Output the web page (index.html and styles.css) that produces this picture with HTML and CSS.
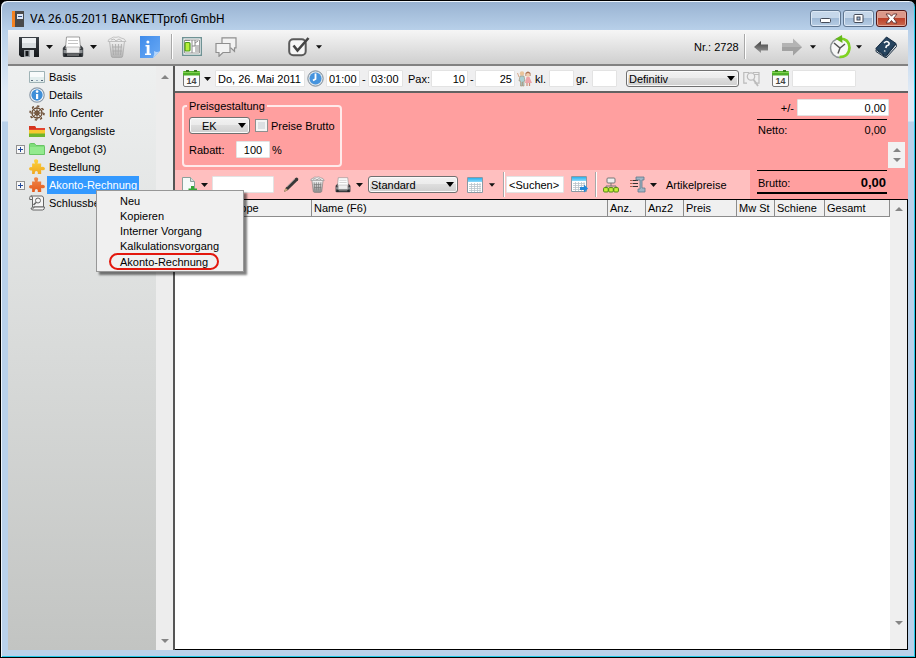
FILE: index.html
```html
<!DOCTYPE html>
<html lang="de">
<head>
<meta charset="utf-8">
<title>VA 26.05.2011 BANKETTprofi GmbH</title>
<link rel="stylesheet" href="styles.css">
</head>
<body>
<svg class="defs" aria-hidden="true">
  <defs>
    <linearGradient id="g-steel" x1="0" y1="0" x2="0" y2="1"><stop offset="0" stop-color="#fafafa"/><stop offset="1" stop-color="#8c8c8c"/></linearGradient>
    <linearGradient id="g-dark" x1="0" y1="0" x2="0" y2="1"><stop offset="0" stop-color="#3c4147"/><stop offset="1" stop-color="#15181b"/></linearGradient>
    <linearGradient id="g-arrow" x1="0" y1="0" x2="0" y2="1"><stop offset="0" stop-color="#3e3e3e"/><stop offset="1" stop-color="#9a9a9a"/></linearGradient>
    <linearGradient id="g-sky" x1="0" y1="0" x2="0" y2="1"><stop offset="0" stop-color="#27b2ef"/><stop offset="1" stop-color="#8fd8f8"/></linearGradient>
    <linearGradient id="g-blue" x1="0" y1="0" x2="1" y2="1"><stop offset="0" stop-color="#3f8bea"/><stop offset="1" stop-color="#6aaaf5"/></linearGradient>
    <linearGradient id="g-orange" x1="0" y1="0" x2="0" y2="1"><stop offset="0" stop-color="#f08a4c"/><stop offset="1" stop-color="#e4591b"/></linearGradient>
    <linearGradient id="g-yellow" x1="0" y1="0" x2="0" y2="1"><stop offset="0" stop-color="#fcd23c"/><stop offset="1" stop-color="#f0a820"/></linearGradient>
    <symbol id="caret" viewBox="0 0 7 4"><path d="M0 0h7L3.500 4z" fill="#111"/></symbol>
    <symbol id="calendar" viewBox="0 0 17 17">
      <path d="M.5 3.500h16v11.500q0 1.500-1.500 1.500H2q-1.500 0-1.500-1.500z" fill="#fbfbfb" stroke="#777"/>
      <path d="M0 2q0-1 1-1h15q1 0 1 1v3.500H0z" fill="#4fae28"/><path d="M0 2h17v1H0z" fill="#7fd44f"/>
      <path d="M3 0h3v2H3zM11 0h3v2h-3z" fill="#3a7d20"/>
      <text x="8.500" y="14" text-anchor="middle" font-family="Liberation Sans, sans-serif" font-size="9" font-weight="bold" fill="#444">14</text>
    </symbol>
    <symbol id="trash" viewBox="0 0 20 22">
      <path d="M2.500 5h15l-1.800 15q-.2 1.500-2 1.500H6.300q-1.800 0-2-1.500z" fill="url(#g-steel)" stroke="#777" stroke-width=".8"/>
      <path d="M1 5.500q0-2.500 3-3Q6 .3 9 1.300q3-1.300 5 .7 4 .3 5 3.500z" fill="#eee" stroke="#888" stroke-width=".8"/>
      <path d="M4 4l3-1 2 2 3-2 3 2" fill="none" stroke="#777" stroke-width=".8"/>
      <path d="M5.500 8l1 11M8.500 8l.4 11M11.500 8l-.4 11M14.500 8l-1 11M5 11h10M5.500 15h9.500" stroke="#777" stroke-width=".9" fill="none"/>
    </symbol>
    <symbol id="printer" viewBox="0 0 22 22">
      <path d="M4.500 1h13l1 11H3.500z" fill="#fff" stroke="#888" stroke-width=".8"/><path d="M6 4.500h10M6 7.500h10" stroke="#c4c4c4"/>
      <path d="M3.500 9L.8 12v7.500q0 1.500 1.500 1.500h17.400q1.500 0 1.500-1.500V12L18.500 9v4h-15z" fill="#3b3f43"/>
      <path d="M1.500 14h19v3h-19z" fill="#8d9194"/><path d="M4.500 11h13v6h-13z" fill="#eee" stroke="#999" stroke-width=".6"/><path d="M3 18h16l1 2.500H2z" fill="#202428"/><path d="M5 18.500h12v1H5z" fill="#aaa"/>
    </symbol>
    <symbol id="sheet" viewBox="0 0 16 16">
      <path d="M.5.500h15v15H.5z" fill="#fff" stroke="#8a98a2"/><path d="M1 1h14v4H1z" fill="url(#g-sky)"/>
      <path d="M2 7.500h12M2 9.500h12M2 11.500h12M2 13.500h12M4.500 6v9M7.500 6v9M10.500 6v9M13 6v9" stroke="#b7c3ca" stroke-width=".8"/>
    </symbol>
    <symbol id="puzzle" viewBox="0 0 18 18">
      <path d="M3.500 5h3.300Q4.800 2 6.500.7 8.500-.3 10 1.200 10.800 3 9.500 5h4.200v4q3.500-1.200 4.200 1.300.2 3.200-4.200 2.200V17H9.800q.7-3.300-1.500-3.400-2.200.1-1.800 3.400h-3v-4.200Q.2 13.800 0 11q.3-2.500 3.500-1.700z"/>
    </symbol>
  </defs>
</svg>
<div class="window">
  <header class="titlebar">
    <svg class="app-icon" viewBox="0 0 12 16" aria-hidden="true"><path d="M0 0h12v16H0z" fill="#4a4a4a"/><path d="M0 0h3v16H0z" fill="#f58220"/><path d="M5 3h6v5H5z" fill="#dfe8f7"/><path d="M6 5h4v1H6z" fill="#35558a"/></svg>
    <h1>VA 26.05.2011 BANKETTprofi GmbH</h1>
    <div class="window-buttons">
      <button class="win" type="button" aria-label="Minimieren"><svg width="13" height="11" viewBox="0 0 13 11"><rect x="1.500" y="5.500" width="10" height="4" rx="1" fill="#fff" stroke="#444b58"/></svg></button>
      <button class="win" type="button" aria-label="Maximieren"><svg width="13" height="11" viewBox="0 0 13 11"><rect x="2" y="1.500" width="9" height="8" rx="1" fill="#fff" stroke="#444b58"/><rect x="5" y="4" width="3" height="3" fill="#9db7d6" stroke="#444b58"/></svg></button>
      <button class="win close" type="button" aria-label="Schließen"><svg width="13" height="11" viewBox="0 0 13 11"><path d="M1 1h3.500l2 2.200L8.500 1H12L8.700 5.300 12 10H8.500l-2-2.500-2 2.500H1l3.300-4.700z" fill="#fff" stroke="#5b3030" stroke-width=".9"/></svg></button>
    </div>
  </header>

  <div class="client">
    <div class="toolbar">
      <div class="tools">
        <button type="button" aria-label="Speichern"><svg width="20" height="20" viewBox="0 0 20 20"><path d="M0 0h20v20H2l-2-2z" fill="url(#g-dark)"/><path d="M3 1h14v10H3z" fill="#eef1f3"/><path d="M3 6h14v5H3z" fill="#d8dde0"/><path d="M5 13h10v7H5z" fill="#9ba0a4"/><path d="M6.500 14h3v5h-3z" fill="#15181b"/><path d="M11 13h4v7h-4z" fill="#d0d3d5"/></svg></button>
        <button type="button" aria-label="Speichern Optionen"><svg width="7" height="4"><use href="#caret"/></svg></button>
        <button type="button" aria-label="Drucken"><svg width="22" height="22"><use href="#printer"/></svg></button>
        <button type="button" aria-label="Drucken Optionen"><svg width="7" height="4"><use href="#caret"/></svg></button>
        <button class="faded" type="button" aria-label="Löschen"><svg width="20" height="22"><use href="#trash"/></svg></button>
        <button type="button" aria-label="Information"><svg width="20" height="22" viewBox="0 0 20 22"><path d="M0 0h20v15l-7 7H0z" fill="url(#g-blue)"/><path d="M20 15l-7 7q2-4 1-7 3 2 6 0z" fill="#b5d6fc"/><path d="M5.500 9h4v8.500H11V19H5v-1.500h1.700v-7H5.500z" fill="#fff"/><circle cx="7.900" cy="6" r="1.500" fill="#fff"/></svg></button>
        <span class="rule"></span>
        <button type="button" aria-label="Raumplan"><svg width="20" height="19" viewBox="0 0 20 19"><rect x=".7" y=".7" width="18.600" height="17.600" fill="#fff" stroke="#6f9294" stroke-width="1.400"/><path d="M2.500 3h15v13h-15z" fill="none" stroke="#999"/><rect x="3" y="5.500" width="5" height="8.500" rx="1" fill="#b5ee3a" stroke="#4c9a18" stroke-width="1.200"/><path d="M3 3.500h5M10 3v13M10 9h3V3M13 6l3-2M14 8v7M16 8v7" stroke="#888" fill="none"/></svg></button>
        <button type="button" aria-label="Nachrichten"><svg width="22" height="20" viewBox="0 0 22 20" fill="#f2f2f2" stroke="#8f8f8f" stroke-width="1.200"><path d="M7 .8h14v10h-1.500v3.500L16 11H7z"/><path d="M1 6.500h14v9H8l-4 3.800v-3.800H1z"/></svg></button>
        <button type="button" aria-label="Erledigt"><svg width="23" height="21" viewBox="0 0 23 21"><rect x="1.200" y="3.200" width="16.500" height="16" rx="4" fill="#f7f7f7" stroke="#5a5a5a" stroke-width="2"/><path d="M5.500 9.500l4 5L20.500 2" fill="none" stroke="#444" stroke-width="2.600"/></svg></button>
        <button type="button" aria-label="Erledigt Optionen"><svg width="6" height="4"><use href="#caret"/></svg></button>
      </div>
      <div class="tools-right">
        <span class="number">Nr.: 2728</span>
        <span class="rule"></span>
        <button type="button" aria-label="Zurück"><svg width="14" height="14" viewBox="0 0 14 14"><path d="M0 7l7-6v3.500h7v6H7V13z" fill="url(#g-arrow)"/></svg></button>
        <button type="button" aria-label="Vor"><svg width="20" height="18" viewBox="0 0 20 18"><path d="M20 9l-9-8.500V5H0v8h11v4.500z" fill="#b4b4b4"/><path d="M0 9h20l-9 8.500V13H0z" fill="#a2a2a2"/></svg></button>
        <button type="button" aria-label="Verlauf Optionen"><svg width="6" height="4"><use href="#caret"/></svg></button>
        <button type="button" aria-label="Verlauf"><svg width="23" height="24" viewBox="0 0 23 24"><circle cx="11" cy="13" r="9.500" fill="#f7f7f7" stroke="#8d9396" stroke-width="1.500"/><path d="M10 3.500Q20 3 20.500 12.500q-.5 9.500-10 9.500" fill="none" stroke="#7fd321" stroke-width="2.600"/><path d="M13.500 8L6.500 3.800 13 0z" fill="#65b81a"/><path d="M5 8l6 5 5-4M11 13l-2 5.500" fill="none" stroke="#555" stroke-width="1.500"/></svg></button>
        <button type="button" aria-label="Termine Optionen"><svg width="6" height="4"><use href="#caret"/></svg></button>
        <button type="button" aria-label="Hilfe"><svg width="22" height="22" viewBox="0 0 22 22"><path d="M1 13.500L10.500 21 21 8l.5 2.500L11 22 1 15.500z" fill="#dfe4e8" stroke="#172c40"/><path d="M11.500 1L21 7.500 10.500 20 .8 12.500z" fill="#26445f" stroke="#142b42"/><path d="M9 7q3-3 5 0 .8 2-2.500 3l-.7 2M10 14.500l-.5 1" fill="none" stroke="#fff" stroke-width="1.600"/></svg></button>
      </div>
    </div>

    <div class="workspace">
      <nav class="sidebar" aria-label="Vorgang">
        <ul class="tree">
          <li><span></span><svg viewBox="0 0 16 16"><path d="M.5 2.500h15v11H.5z" fill="#e3eeee" stroke="#9fb3b6"/><path d="M1 3h14v5H1z" fill="#f8fbfb"/><path d="M2 11.500h2M12 11.500h2" stroke="#567"/><path d="M7 11.500h2" stroke="#9ab"/></svg><a href="#">Basis</a></li>
          <li><span></span><svg viewBox="0 0 16 16"><circle cx="8" cy="8" r="7.200" fill="#fff" stroke="#8a99a8" stroke-width="1.200"/><circle cx="8" cy="8" r="5.700" fill="#3f8fd8"/><path d="M7 7h2.200v5H7z" fill="#fff"/><circle cx="8.100" cy="4.600" r="1.300" fill="#fff"/></svg><a href="#">Details</a></li>
          <li><span></span><svg viewBox="0 0 16 16" fill="none" stroke="#6b4c33"><circle cx="8" cy="8" r="5" stroke-width="1.300"/><circle cx="8" cy="8" r="2" stroke-width="1.300"/><path d="M8 1v14M1 8h14M3 3l10 10M13 3L3 13" stroke-width=".8"/><circle cx="8" cy="8" r="7" stroke-dasharray="2.200 3.300" stroke-width="1.500"/></svg><a href="#">Info Center</a></li>
          <li><span></span><svg viewBox="0 0 16 16"><path d="M0 3h6l1 2h9v3H0z" fill="#e3442d"/><path d="M0 7h16v4H0z" fill="#f7c92e"/><path d="M0 10.500h16V14H0z" fill="#70b52c"/><path d="M0 3h6l1 2v1H0z" fill="#d4341f"/></svg><a href="#">Vorgangsliste</a></li>
          <li><button class="plus" type="button" aria-label="Angebot aufklappen"></button><svg viewBox="0 0 16 16"><path d="M.5 3.500q0-1 1-1h4l1.500 2h8q.5 0 .5 1v8H.5z" fill="#7fdd7a" stroke="#68c565"/><path d="M1 6h14v7H1z" fill="#93ea8e"/></svg><a href="#">Angebot (3)</a></li>
          <li><span></span><svg viewBox="0 0 18 18"><use href="#puzzle" fill="url(#g-yellow)"/></svg><a href="#">Bestellung</a></li>
          <li><button class="plus" type="button" aria-label="Akonto-Rechnung aufklappen"></button><svg viewBox="0 0 18 18"><use href="#puzzle" fill="url(#g-orange)"/></svg><a class="selected" href="#">Akonto-Rechnung</a></li>
          <li><span></span><svg viewBox="0 0 16 16" fill="#f5f5f5" stroke="#666"><path d="M3.500 12V3q0-2-1.500-2h11q1.500.5 1.500 2v9z"/><path d="M3.500 4.500H.7V2.500Q.8 1 2 1t1.500 2z"/><path d="M5 12h10.500q0 3-2 3H4q-2-.2-2-2h3z"/><circle cx="9" cy="5.500" r="2.500"/><path d="M7 7.500L4.500 10" stroke-width="1.600"/></svg><a href="#">Schlussbe</a></li>
        </ul>
        <div class="scrollbar"><i class="up"></i><i class="down"></i></div>
      </nav>

      <main class="main">
        <div class="event">
          <button type="button" aria-label="Kalender"><svg width="17" height="17"><use href="#calendar"/></svg></button>
          <button type="button" aria-label="Kalender Optionen"><svg width="7" height="4"><use href="#caret"/></svg></button>
          <input class="date" type="text" aria-label="Datum" value="Do, 26. Mai 2011">
          <svg width="17" height="17" viewBox="0 0 17 17" aria-hidden="true"><circle cx="8.500" cy="8.500" r="7.700" fill="#dce4ea" stroke="#7c8a96"/><circle cx="8.500" cy="8.500" r="6" fill="#4694de"/><path d="M8.500 3.500v5.500L6 10.500" stroke="#fff" stroke-width="1.800" fill="none"/></svg>
          <input type="text" aria-label="Beginn" value="01:00">
          <span>-</span>
          <input type="text" aria-label="Ende" value="03:00">
          <label for="pax">Pax:</label>
          <input class="num" id="pax" type="text" value="10">
          <span>-</span>
          <input class="num" type="text" aria-label="Pax bis" value="25">
          <svg width="17" height="17" viewBox="0 0 17 17" aria-hidden="true"><circle cx="5" cy="3.500" r="2.200" fill="#e9c49b"/><path d="M3 6h4l1 5H7v5H5.500v-4H5v4H3.500v-5H2z" fill="#a9cfd3" stroke="#a28a6b" stroke-width=".6"/><path d="M2 7L.5 3" stroke="#d8a98a"/><path d="M8.500 3q2.500-3 5 0v3h-5z" fill="#a96f4e"/><circle cx="11" cy="5" r="2" fill="#f1cdb0"/><path d="M9.500 7h3l2.500 6H8z" fill="#eea3a8"/><path d="M10 13v3M12.500 13v3" stroke="#c98c74" stroke-width="1.200"/></svg>
          <label for="kl">kl.</label>
          <input id="kl" type="text">
          <label for="gr">gr.</label>
          <input id="gr" type="text">
          <span class="select status"><select aria-label="Status"><option>Definitiv</option></select></span>
          <button class="faded" type="button" aria-label="Suchen"><svg width="17" height="16" viewBox="0 0 17 16" fill="none" stroke="#888" stroke-width="1.200"><path d="M6 1.500H.8v10.700H4M10 1.500h6v10.700h-4.500M11 3.500h5"/><circle cx="8" cy="5.500" r="3.700"/><path d="M10.500 8.500l4.500 6.500" stroke-width="1.800"/></svg></button>
          <button type="button" aria-label="Optionsdatum"><svg width="17" height="17"><use href="#calendar"/></svg></button>
          <input type="text" aria-label="Option bis">
        </div>

        <section class="pricing">
          <div class="pricing-left">
            <fieldset class="group">
              <legend>Preisgestaltung</legend>
              <div class="line">
                <span class="select ek"><select aria-label="Preisart"><option>EK</option></select></span>
                <input class="check" id="brutto" type="checkbox"><label for="brutto">Preise Brutto</label>
              </div>
              <div class="line">
                <label class="rabatt" for="rabatt">Rabatt:</label><input class="percent" id="rabatt" type="text" value="100"><span>%</span>
              </div>
            </fieldset>
            <div class="items-bar">
              <button type="button" aria-label="Neu"><svg width="16" height="16" viewBox="0 0 16 16"><path d="M1.500.500h8l4 4v11h-12z" fill="#f5faf8" stroke="#8ba09a"/><path d="M9.500.500v4h4" fill="#d4e2dd" stroke="#8ba09a"/><path d="M10 9h3v2.500h3v3h-3V16h-3v-1.500H7.500v-3H10z" fill="#35a535"/></svg></button>
              <button type="button" aria-label="Neu Optionen"><svg width="7" height="4"><use href="#caret"/></svg></button>
              <input class="article" type="text" aria-label="Artikel">
              <button type="button" aria-label="Bearbeiten"><svg width="16" height="16" viewBox="0 0 16 16"><path d="M1 15l1.500-4L12.500 1q1-1 2.200 0t.3 2.300L5 13z" fill="#383838"/><path d="M1 15l1.500-4L5 13z" fill="#caa77d"/><path d="M4 10l8-8" stroke="#888"/></svg></button>
              <button type="button" aria-label="Position löschen"><svg width="15" height="17"><use href="#trash"/></svg></button>
              <button type="button" aria-label="Liste drucken"><svg width="16" height="16"><use href="#printer"/></svg></button>
              <button type="button" aria-label="Liste drucken Optionen"><svg width="7" height="4"><use href="#caret"/></svg></button>
              <span class="select view"><select aria-label="Ansicht"><option>Standard</option></select></span>
              <button type="button" aria-label="Tabelle"><svg width="16" height="16"><use href="#sheet"/></svg></button>
              <button type="button" aria-label="Tabelle Optionen"><svg width="6" height="4"><use href="#caret"/></svg></button>
              <span class="rule"></span>
              <input class="search" type="text" aria-label="Suchen" value="&lt;Suchen&gt;">
              <button type="button" aria-label="Suche übernehmen"><svg width="17" height="17" viewBox="0 0 17 17"><use href="#sheet" width="16" height="16"/><path d="M9 11h4V8.500l4 4-4 4V14H9z" fill="#2187d8"/></svg></button>
              <span class="rule"></span>
              <button type="button" aria-label="Struktur"><svg width="16" height="16" viewBox="0 0 16 16"><rect x="4" y="1" width="8" height="5" rx="1" fill="#eee" stroke="#777"/><path d="M8 6v3M3 11V9h10v2" fill="none" stroke="#777"/><g fill="#c8ef3a" stroke="#4d8a12"><rect x=".6" y="10.600" width="4.600" height="4.400" rx="1"/><rect x="5.700" y="10.600" width="4.600" height="4.400" rx="1"/><rect x="10.800" y="10.600" width="4.600" height="4.400" rx="1"/></g></svg></button>
              <button type="button" aria-label="Komprimieren"><svg width="16" height="17" viewBox="0 0 16 17"><path d="M0 4.500h2M0 7.500h2M0 10.500h2" stroke="#b35b4a" stroke-width="1.200"/><path d="M2.500 4.500H8M2.500 7.500H8M2.500 10.500H8" stroke="#333"/><path d="M6 1h8v3h-2v8h3v4H8v-3h2V4H6z" fill="#9fb4c4" stroke="#5f788c" stroke-width=".8"/></svg></button>
              <button type="button" aria-label="Komprimieren Optionen"><svg width="7" height="4"><use href="#caret"/></svg></button>
              <button class="text-button" type="button">Artikelpreise</button>
            </div>
          </div>
          <div class="totals">
            <div class="adjust"><label for="adjust">+/-</label><input class="num" id="adjust" type="text" value="0,00"></div>
            <div class="net"><span>Netto:</span><span>0,00</span></div>
            <div class="spinner"><i class="up"></i><i class="down"></i></div>
            <div class="gross"><span>Brutto:</span><strong>0,00</strong></div>
          </div>
        </section>

        <section class="grid">
          <div class="grid-area">
            <table>
              <colgroup><col class="c-mark"><col class="c-group"><col><col class="c-anz"><col class="c-anz"><col class="c-preis"><col class="c-anz"><col class="c-schiene"><col class="c-gesamt"></colgroup>
              <thead><tr><th></th><th>Gruppe</th><th>Name (F6)</th><th>Anz.</th><th>Anz2</th><th>Preis</th><th>Mw St</th><th>Schiene</th><th>Gesamt</th></tr></thead>
            </table>
          </div>
          <div class="scrollbar raised"><i class="up"></i><i class="down"></i></div>
        </section>
      </main>
    </div>
  </div>

  <div class="context-menu" role="menu">
    <button type="button" role="menuitem">Neu</button>
    <button type="button" role="menuitem">Kopieren</button>
    <button type="button" role="menuitem">Interner Vorgang</button>
    <button type="button" role="menuitem">Kalkulationsvorgang</button>
    <button class="marked" type="button" role="menuitem">Akonto-Rechnung</button>
  </div>
</div>
</body>
</html>
```
FILE: styles.css
```css
* { box-sizing: border-box; }

body {
  margin: 0;
  background: #000;
  color: #000;
  font: 11px/14px "Liberation Sans", Arial, sans-serif;
}

button, input, select { font: inherit; color: inherit; }

button {
  padding: 0;
  border: 0;
  background: none;
  display: flex;
  align-items: center;
  justify-content: center;
}

label, span { white-space: nowrap; }
svg { display: block; flex: none; }
.defs { position: absolute; width: 0; height: 0; }
.faded { opacity: 0.5; }

input[type="text"] {
  min-width: 0;
  height: 17px;
  padding: 0 2px;
  border: 1px solid #e3e3e3;
  border-radius: 1px;
  background: #fff;
}

input.num { text-align: right; }

/* Window frame */
.window {
  position: relative;
  min-height: 100vh;
  display: flex;
  flex-direction: column;
  padding: 0 7px 7px;
  border: 1px solid #000;
  border-radius: 7px 7px 0 0;
  box-shadow: inset 1px 1px #eef5fc, inset -1px -1px #22c8e8;
  background: linear-gradient(#98b2d1, #b9d1ea 30px, #dfeaf6 90px, #dfeaf6 120px, #b9d1ea 121px);
}

.titlebar {
  height: 29px;
  display: flex;
  align-items: center;
  padding: 6px 1px 0 4px;
}

.app-icon { width: 12px; height: 16px; }
.titlebar h1 { margin: 0 0 0 6px; font: 12px/16px Roboto, sans-serif; }

.window-buttons { display: flex; gap: 2px; margin-left: auto; }

.win {
  width: 31px;
  height: 17px;
  border: 1px solid #5f7690;
  border-radius: 3px;
  box-shadow: inset 0 0 0 1px #dce8f5;
  background: linear-gradient(#c5d7ea 48%, #a0bad6 50%, #b7cde4);
}

.close {
  border-color: #521818;
  box-shadow: inset 0 0 0 1px #e3a898;
  background: linear-gradient(#db988a 45%, #bd4029 50%, #c96a50);
}

.client { flex: 1; display: flex; flex-direction: column; }

/* Main toolbar */
.toolbar {
  height: 36px;
  display: flex;
  justify-content: space-between;
  padding-bottom: 1px;
  border-bottom: 2px solid #828282;
  background: linear-gradient(#f6f6f6, #cfcfcf);
}

.tools, .tools-right { display: grid; align-items: center; justify-items: end; }
.tools { grid-template-columns: 31px 14px 31px 13px 30px 33px 12px 30px 35px 74px 11px; }
.tools-right { grid-template-columns: 50px 1px 23px 34px 14px 36px 10px 35px; padding-right: 11px; }
.number { justify-self: start; }
.rule { width: 1px; height: 25px; background: #a8a8a8; box-shadow: 1px 0 #fff; }

.workspace { flex: 1; display: flex; }

/* Navigation */
.sidebar {
  width: 165px;
  flex: none;
  display: flex;
  justify-content: space-between;
  background: linear-gradient(#eef0f0, #c2c4c2);
}

.tree { margin: 0; padding: 2px 0 0 8px; list-style: none; }
.tree li { height: 18px; display: grid; grid-template-columns: 9px 16px auto; column-gap: 4px; align-items: center; }
.tree svg { width: 16px; height: 16px; }
.tree a { justify-self: start; margin-left: -2px; padding: 2px; color: #000; text-decoration: none; white-space: nowrap; }
.tree .selected { background: #39f; color: #fff; }

.plus {
  width: 9px;
  height: 9px;
  border: 1px solid #919191;
  background:
    linear-gradient(#234b9b, #234b9b) center / 5px 1px no-repeat,
    linear-gradient(#234b9b, #234b9b) center / 1px 5px no-repeat,
    #f8f8f8;
}

.scrollbar {
  width: 17px;
  flex: none;
  display: flex;
  flex-direction: column;
  justify-content: space-between;
  padding: 9px 0 7px;
  background: #ededed;
}

.up, .down { align-self: center; border: solid transparent; border-width: 0 4px; }
.up { border-bottom: 4px solid #858585; }
.down { border-top: 4px solid #858585; }

.main { flex: 1; min-width: 0; display: flex; flex-direction: column; border-left: 2px solid #555; }

/* Date, guests and status */
.event {
  height: 27px;
  display: grid;
  grid-template-columns: 21px 11px 92px 19px 36px 6px 40px 23px 39px 5px 42px 18px 14px 27px 16px 34px 117px 29px 20px 66px;
  align-items: center;
  justify-items: start;
  padding-left: 8px;
  border-bottom: 2px solid #626262;
  background: #efeff0;
}

.event input[type="text"] { width: calc(100% - 2px); }
.event input[aria-label="Ende"] { width: 35px; }
.event #gr { width: 25px; }

.select { position: relative; display: block; }
.select::after {
  content: "";
  position: absolute;
  right: 4px;
  top: 6px;
  border: 4px solid transparent;
  border-top: 5px solid #000;
  border-bottom: 0;
  pointer-events: none;
}

.status { width: 113px; }

select {
  display: block;
  width: 100%;
  height: 17px;
  padding: 0 2px;
  appearance: none;
  border: 1px solid #707070;
  border-radius: 3px;
  box-shadow: inset 0 0 0 1px #fafafa;
  background: linear-gradient(#f2f2f2, #ebebeb 48%, #ddd 50%, #cfcfcf);
}

/* Pricing */
.pricing { display: flex; background: #ff9f9f; }
.pricing-left { width: 575px; flex: none; }

.group {
  width: 159px;
  height: 68px;
  margin: 6px 0 3px 7px;
  padding: 4px 5px 0;
  border: 2px solid #ffeaea;
  border-radius: 4px;
}

.group legend { padding: 0 2px; margin-left: -2px; }
.line { display: flex; align-items: center; height: 17px; margin-bottom: 7px; }
.ek { width: 61px; }
.ek select { padding-left: 12px; }
.check { appearance: none; width: 13px; height: 13px; flex: none; margin: 0 3px 0 5px; border: 1px solid #8e8f8f; background: #dcdfe2; box-shadow: inset 0 0 0 2px #f4f4f4; }
.rabatt { width: 47px; }
.line .percent { width: 34px; margin-right: 2px; text-align: center; }

.items-bar {
  height: 29px;
  display: grid;
  grid-template-columns: 15px 11px 66px 25px 26px 26px 12px 95px 25px 12px 9px 60px 24px 8px 23px 27px 11px auto;
  align-items: center;
  justify-content: start;
  justify-items: end;
  padding-left: 7px;
  background: #ffbfbf;
}

.items-bar .article { width: 62px; }
.items-bar .search { width: 58px; }
.view { width: 90px; }
.text-button { margin-left: 9px; white-space: nowrap; }

.totals { width: 151px; margin-left: auto; padding: 6px 0 5px; display: flex; flex-direction: column; }
.adjust { display: flex; justify-content: flex-end; align-items: center; gap: 3px; margin-right: 19px; }
.adjust input[type="text"] { width: 92px; }
.net, .gross { width: 130px; display: flex; justify-content: space-between; padding: 0 1px; border-top: 1px solid #000; }
.net { height: 20px; margin-top: 3px; padding-top: 3px; }
.spinner { width: 17px; height: 26px; margin: 3px 3px 2px auto; display: flex; flex-direction: column; justify-content: space-between; padding: 6px 0; background: #f2f2f2; }
.gross { height: 24px; padding-top: 5px; border-bottom: 2px solid #000; }
.gross strong { font-size: 13px; }

/* Item table */
.grid { flex: 1; display: flex; border: solid #000; border-width: 1px 1px 1px 0; background: #fff; }
.grid-area { flex: 1; min-width: 0; }
table { width: 100%; table-layout: fixed; border-collapse: separate; border-spacing: 0; }
th { height: 17px; padding: 0 2px; border: solid #8c8c8c; border-width: 0 1px 1px 0; background: #f0f0f0; font-weight: normal; text-align: left; white-space: nowrap; }
.c-mark { width: 45px; }
.c-group { width: 92px; }
.c-anz { width: 38px; }
.c-preis { width: 53px; }
.c-schiene { width: 50px; }
.c-gesamt { width: 65px; }
.raised { background: #efefef; padding: 7px 0 24px; }

/* Context menu */
.context-menu {
  position: absolute;
  left: 95px;
  top: 189px;
  width: 148px;
  padding: 2px 0 1px;
  border: 1px solid #979797;
  background: #f0f0f0;
  box-shadow: 3px 3px 2px rgba(0, 0, 0, 0.5);
}

.context-menu button { height: 15px; margin-left: 12px; padding: 0 11px; white-space: nowrap; }
.context-menu .marked { height: 17px; padding: 0 9px; border: 2px solid #e3170d; border-radius: 9px; }
```
